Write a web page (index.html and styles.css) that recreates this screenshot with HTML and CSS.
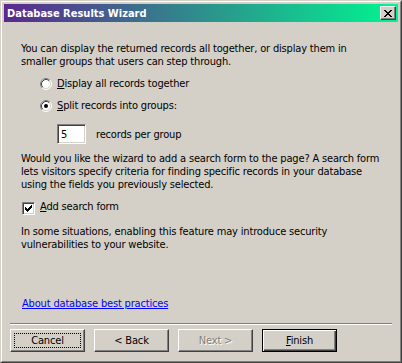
FILE: index.html
```html
<!DOCTYPE html>
<html>
<head>
<meta charset="utf-8">
<link rel="stylesheet" href="styles.css">
</head>
<body>
<div class="window">
  <div class="frame">
    <div class="titlebar">
      <span class="title">Database Results Wizard</span>
      <span class="close">
        <svg width="8" height="7" viewBox="0 0 8 7" shape-rendering="crispEdges"><path fill="#000" d="M0 0h2v1h-2z M6 0h2v1h-2z M1 1h2v1h-2z M5 1h2v1h-2z M2 2h4v1h-4z M3 3h2v1h-2z M2 4h4v1h-4z M1 5h2v1h-2z M5 5h2v1h-2z M0 6h2v1h-2z M6 6h2v1h-2z"/></svg>
      </span>
    </div>
    <div class="content">
      <p class="para">You can display the returned records all together, or display them in<br>smaller groups that users can step through.</p>
      <div class="option">
        <svg class="radio" width="12" height="12" viewBox="0 0 12 12">
          <circle cx="6" cy="6" r="5" fill="#fff"/>
          <path d="M2.11 9.89A5.5 5.5 0 0 1 9.89 2.11" fill="none" stroke="#808080"/>
          <path d="M9.89 2.11A5.5 5.5 0 0 1 2.11 9.89" fill="none" stroke="#fff"/>
          <path d="M2.82 9.18A4.5 4.5 0 0 1 9.18 2.82" fill="none" stroke="#404040"/>
          <path d="M9.18 2.82A4.5 4.5 0 0 1 2.82 9.18" fill="none" stroke="#d4d0c8"/>
        </svg>
        <span class="label"><u>D</u>isplay all records together</span>
      </div>
      <div class="option">
        <svg class="radio" width="12" height="12" viewBox="0 0 12 12">
          <circle cx="6" cy="6" r="5" fill="#fff"/>
          <path d="M2.11 9.89A5.5 5.5 0 0 1 9.89 2.11" fill="none" stroke="#808080"/>
          <path d="M9.89 2.11A5.5 5.5 0 0 1 2.11 9.89" fill="none" stroke="#fff"/>
          <path d="M2.82 9.18A4.5 4.5 0 0 1 9.18 2.82" fill="none" stroke="#404040"/>
          <path d="M9.18 2.82A4.5 4.5 0 0 1 2.82 9.18" fill="none" stroke="#d4d0c8"/>
          <circle cx="6" cy="6" r="2" fill="#000"/>
        </svg>
        <span class="label"><u>S</u>plit records into groups:</span>
      </div>
      <div class="group-row">
        <span class="textbox">5</span>
        <span class="label">records per group</span>
      </div>
      <p class="para para2">Would you like the wizard to add a search form to the page? A search form<br>lets visitors specify criteria for finding specific records in your database<br>using the fields you previously selected.</p>
      <div class="check-row">
        <span class="checkbox">
          <svg width="7" height="7" viewBox="0 0 7 7" shape-rendering="crispEdges"><path fill="#000" d="M0 2h1v3h-1z M1 3h1v3h-1z M2 4h1v3h-1z M3 3h1v3h-1z M4 2h1v3h-1z M5 1h1v3h-1z M6 0h1v3h-1z"/></svg>
        </span>
        <span class="label"><u>A</u>dd search form</span>
      </div>
      <p class="para para3">In some situations, enabling this feature may introduce security<br>vulnerabilities to your website.</p>
      <a class="link" href="#">About database best practices</a>
    </div>
    <div class="separator"></div>
    <div class="buttons">
      <span class="btn focused"><span class="focus-ring">Cancel</span></span>
      <span class="btn">&lt; Back</span>
      <span class="btn disabled">Next &gt;</span>
      <span class="btn default"><span><u>F</u>inish</span></span>
    </div>
  </div>
</div>
</body>
</html>
```

FILE: styles.css
```css
* { box-sizing: border-box; }
html, body {
  margin: 0;
  padding: 0;
  background: #d4d0c8;
}
body {
  font-family: "DejaVu Sans Condensed", "DejaVu Sans", sans-serif;
  font-size: 11px;
  line-height: 13px;
  letter-spacing: -0.17px;
  color: #000;
}
.window {
  width: 402px;
  height: 363px;
  border: 1px solid;
  border-color: #d4d0c8 #404040 #404040 #d4d0c8;
  background: #d4d0c8;
}
.frame {
  height: 100%;
  border: 1px solid;
  border-color: #fff #808080 #808080 #fff;
  padding: 2px;
  display: flex;
  flex-direction: column;
}
.titlebar {
  height: 18px;
  flex: none;
  display: flex;
  align-items: center;
  justify-content: space-between;
  padding: 0 2px 0 3px;
  background: linear-gradient(to right, #5a2890, #2e8f8c 50%, #00f591);
}
.title {
  color: #fff;
  font-weight: bold;
  letter-spacing: 0;
  white-space: nowrap;
}
.close {
  width: 16px;
  height: 14px;
  display: flex;
  align-items: center;
  justify-content: center;
  background: #d4d0c8;
  border: 1px solid;
  border-color: #fff #404040 #404040 #fff;
  box-shadow: inset -1px -1px #808080;
}
.close svg { display: block; }
.content {
  flex: 1;
  display: flex;
  flex-direction: column;
  align-items: flex-start;
  padding: 20px 0 13px 17px;
}
.para {
  margin: 0;
  white-space: nowrap;
}
.option {
  display: flex;
  align-items: center;
  margin: 9px 0 0 19px;
  height: 13px;
}
.option + .option { margin-top: 9px; }
.radio { display: block; flex: none; }
.option .label { margin-left: 5px; white-space: nowrap; }
.group-row {
  display: flex;
  align-items: center;
  margin: 12px 0 0 36px;
}
.textbox {
  width: 29px;
  height: 20px;
  background: #fff;
  border: 1px solid;
  border-color: #808080 #fff #fff #808080;
  box-shadow: inset 1px 1px #404040, inset -1px -1px #d4d0c8;
  padding: 3px 0 0 3px;
}
.group-row .label { margin-left: 10px; }
.para2 { margin-top: 8px; }
.check-row {
  display: flex;
  align-items: flex-start;
  margin: 9px 0 0 1px;
}
.checkbox {
  width: 13px;
  height: 13px;
  margin-top: 2px;
  flex: none;
  display: flex;
  align-items: center;
  justify-content: center;
  background: #fff;
  border: 1px solid;
  border-color: #808080 #fff #fff #808080;
  box-shadow: inset 1px 1px #404040, inset -1px -1px #d4d0c8;
}
.checkbox svg { display: block; }
.check-row .label { margin-left: 5px; }
.para3 { margin-top: 10px; }
.link {
  margin-top: auto;
  margin-left: 1px;
  color: #0000ff;
  text-decoration: underline;
}
.separator {
  flex: none;
  margin: 0 6px;
  height: 2px;
  border-top: 1px solid #808080;
  border-bottom: 1px solid #fff;
}
.buttons {
  flex: none;
  display: flex;
  gap: 9px;
  padding: 4px 6px 7px 6px;
}
.btn {
  width: 75px;
  height: 23px;
  display: flex;
  align-items: center;
  justify-content: center;
  background: #d4d0c8;
  border: 1px solid;
  border-color: #fff #404040 #404040 #fff;
  box-shadow: inset -1px -1px #808080;
  white-space: nowrap;
}
.btn.focused { padding: 3px; }
.focus-ring {
  width: 100%;
  height: 100%;
  display: flex;
  align-items: center;
  justify-content: center;
  border: 1px dotted #000;
}
.btn.disabled {
  color: #808080;
  text-shadow: 1px 1px #fff;
}
.btn.default {
  border: 1px solid #000;
  box-shadow: inset 1px 1px #fff, inset -1px -1px #404040, inset -2px -2px #808080;
}
```
